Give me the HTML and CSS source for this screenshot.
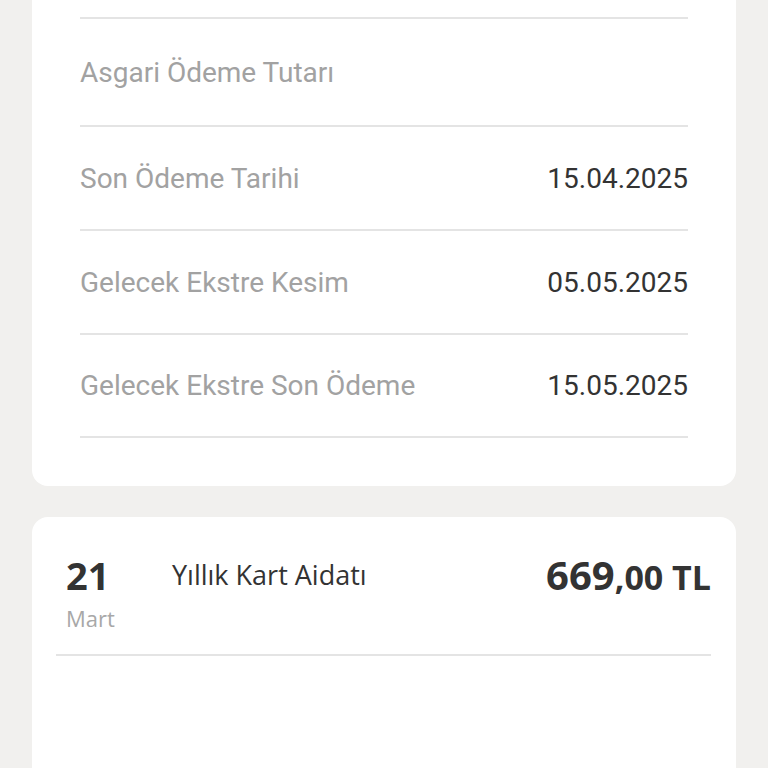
FILE: index.html
```html
<!DOCTYPE html>
<html lang="tr">
<head>
<meta charset="utf-8">
<title>Ekstre</title>
<link rel="stylesheet" href="styles.css">
</head>
<body>
<div class="page">
  <section class="card summary">
    <div class="lead"></div>
    <div class="row first">
      <span class="label">Asgari Ödeme Tutarı</span>
      <span class="value"></span>
    </div>
    <div class="row">
      <span class="label">Son Ödeme Tarihi</span>
      <span class="value">15.04.2025</span>
    </div>
    <div class="row">
      <span class="label">Gelecek Ekstre Kesim</span>
      <span class="value">05.05.2025</span>
    </div>
    <div class="row last">
      <span class="label">Gelecek Ekstre Son Ödeme</span>
      <span class="value">15.05.2025</span>
    </div>
  </section>

  <section class="card txns">
    <div class="txn">
      <div class="date">
        <span class="day">21</span>
        <span class="month">Mart</span>
      </div>
      <div class="title">Yıllık Kart Aidatı</div>
      <div class="amount"><span class="int">669</span><span class="dec">,00 TL</span></div>
    </div>
  </section>
</div>
</body>
</html>
```

FILE: styles.css
```css
html, body {
  margin: 0;
  padding: 0;
  height: 768px;
  overflow: hidden;
  background: #f1f0ee;
}

.page {
  display: flex;
  flex-direction: column;
  gap: 31px;
  padding: 0 32px;
  margin-top: -20px;
}

.card {
  background: #ffffff;
  border-radius: 16px;
}

.summary {
  padding: 0 48px 48px;
  font-family: Roboto, "Liberation Sans", sans-serif;
  font-size: 28px;
}

.lead {
  height: 37px;
}

.row {
  display: flex;
  justify-content: space-between;
  align-items: center;
  height: 102px;
  border-top: 2px solid #e4e4e4;
}

.row.first {
  height: 106px;
}

.row.last {
  height: 101px;
  border-bottom: 2px solid #e4e4e4;
}

.label {
  color: #a2a2a2;
}

.value {
  color: #333333;
}

.txns {
  padding: 36px 25px 0 24px;
  height: 300px;
  font-family: "Open Sans", "Liberation Sans", sans-serif;
}

.txn {
  display: flex;
  align-items: flex-start;
  padding: 0 0 21px 10px;
  border-bottom: 2px solid #e4e4e4;
}

.date {
  display: flex;
  flex-direction: column;
  width: 106px;
}

.day {
  font-size: 38px;
  font-weight: 700;
  line-height: 44px;
  color: #333333;
}

.month {
  font-size: 22px;
  line-height: 30px;
  margin-top: 6px;
  color: #a8a8a8;
}

.title {
  flex: 1;
  font-size: 27px;
  line-height: 43px;
  color: #333333;
}

.amount {
  color: #333333;
  font-weight: 700;
  font-size: 40px;
  line-height: 44px;
  white-space: nowrap;
}

.amount .int {
  font-size: 40px;
}

.amount .dec {
  font-size: 34px;
}
```
